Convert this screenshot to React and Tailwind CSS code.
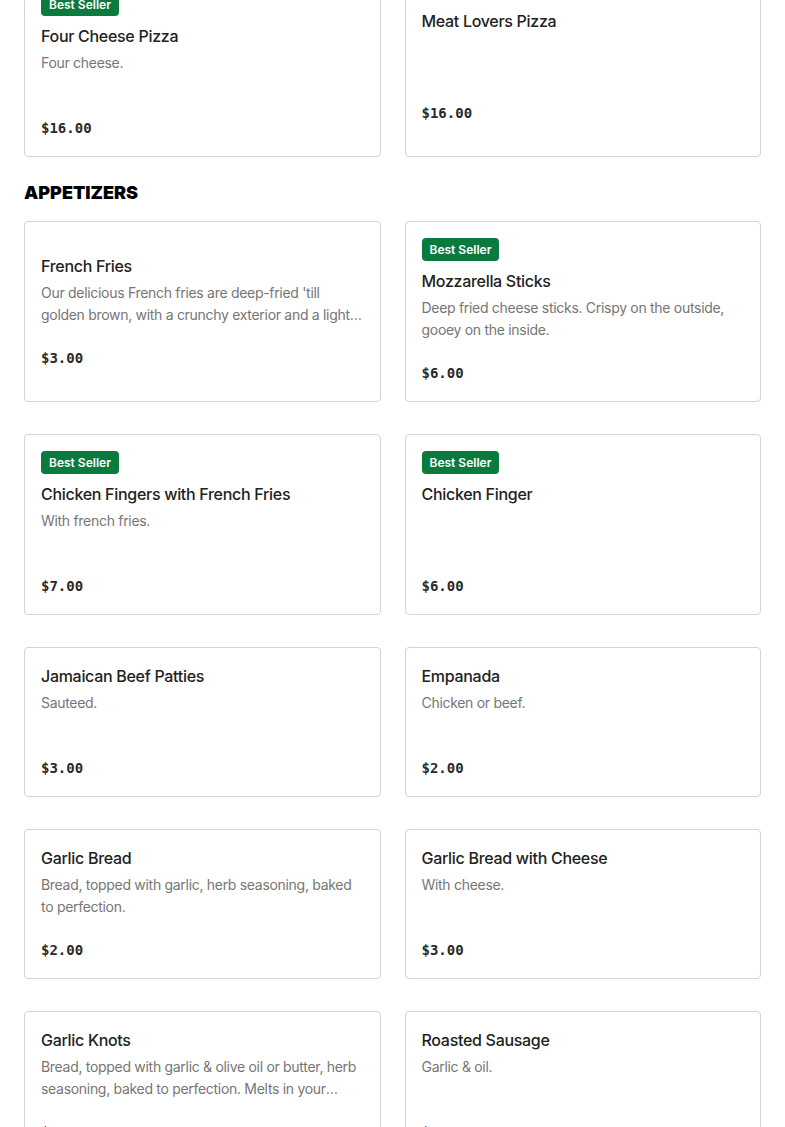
import React from "react";

const topItems = [
  { name: "Four Cheese Pizza", desc: "Four cheese.", price: "$16.00", best: true },
  { name: "Meat Lovers Pizza", desc: "", price: "$16.00", best: false },
];

const appetizers = [
  {
    name: "French Fries",
    desc: "Our delicious French fries are deep-fried 'till golden brown, with a crunchy exterior and a light and fluffy interior.",
    price: "$3.00",
    best: false,
  },
  {
    name: "Mozzarella Sticks",
    desc: "Deep fried cheese sticks. Crispy on the outside, gooey on the inside.",
    price: "$6.00",
    best: true,
  },
  { name: "Chicken Fingers with French Fries", desc: "With french fries.", price: "$7.00", best: true },
  { name: "Chicken Finger", desc: "", price: "$6.00", best: true },
  { name: "Jamaican Beef Patties", desc: "Sauteed.", price: "$3.00", best: false },
  { name: "Empanada", desc: "Chicken or beef.", price: "$2.00", best: false },
  {
    name: "Garlic Bread",
    desc: "Bread, topped with garlic, herb seasoning, baked to perfection.",
    price: "$2.00",
    best: false,
  },
  { name: "Garlic Bread with Cheese", desc: "With cheese.", price: "$3.00", best: false },
  {
    name: "Garlic Knots",
    desc: "Bread, topped with garlic & olive oil or butter, herb seasoning, baked to perfection. Melts in your mouth.",
    price: "$4.00",
    best: false,
  },
  { name: "Roasted Sausage", desc: "Garlic & oil.", price: "$10.00", best: false },
];

function Card({ item }) {
  return (
    <div className="flex flex-col justify-center rounded-[4px] border border-[#d4d4d4] bg-white px-4 pb-[18px] pt-4">
      {item.best && (
        <div className="mb-2 self-start rounded-[4px] bg-[#0a7a3e] px-2 text-[12px] font-semibold leading-[23px] text-white">
          Best Seller
        </div>
      )}
      <div className="text-[16px] font-medium leading-6 tracking-[-0.3px] text-[#222222]">{item.name}</div>
      <div className="mt-1 line-clamp-2 min-h-[44px] text-[14px] leading-[22px] tracking-[-0.3px] text-[#767676]">
        {item.desc}
      </div>
      <div
        className="mt-[22px] text-[14px] font-semibold leading-5 text-[#2a2a2a]"
        style={{ fontFamily: '"DejaVu Sans Mono", "Liberation Mono", monospace' }}
      >
        {item.price}
      </div>
    </div>
  );
}

export default function App() {
  return (
    <div className="min-h-[1127px] overflow-hidden bg-white" style={{ fontFamily: 'Inter, "Noto Sans", sans-serif' }}>
      <div className="-mt-[24px] px-6">
        <div className="grid grid-cols-2 gap-x-6 gap-y-8">
          {topItems.map((it) => (
            <Card key={it.name} item={it} />
          ))}
        </div>
        <h2 className="mb-4 mt-6 text-[18px] font-black uppercase leading-6 text-black">Appetizers</h2>
        <div className="grid grid-cols-2 gap-x-6 gap-y-8">
          {appetizers.map((it) => (
            <Card key={it.name} item={it} />
          ))}
        </div>
      </div>
    </div>
  );
}
